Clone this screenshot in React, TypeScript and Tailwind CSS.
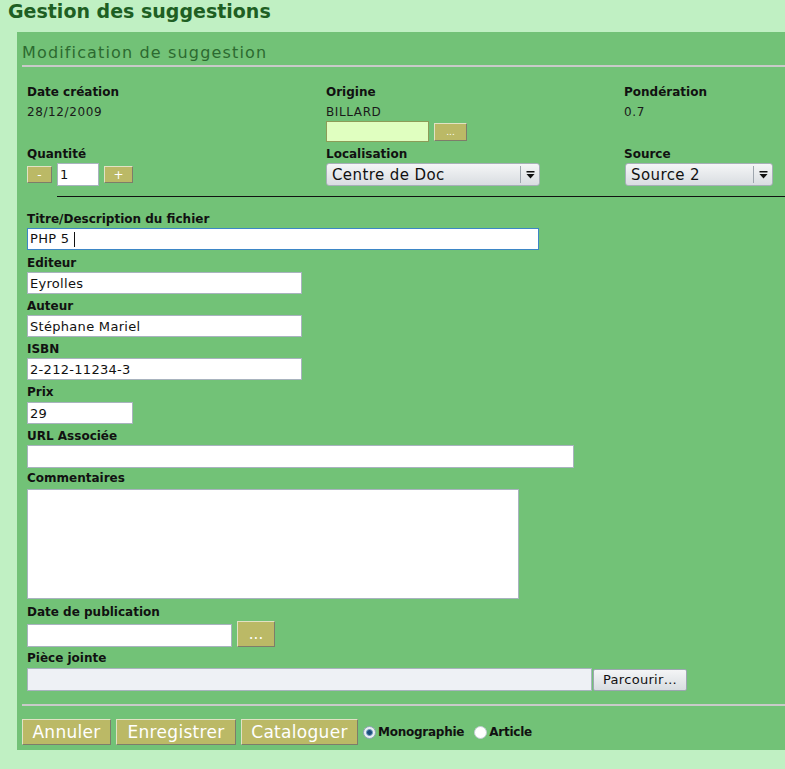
import React from "react";

const Label = ({ children }: { children: React.ReactNode }) => (
  <div className="text-[12px] font-bold leading-[14px] text-[#111]">{children}</div>
);

const Value = ({ children }: { children: React.ReactNode }) => (
  <div className="mt-[6px] text-[12px] leading-[14px] tracking-[0.6px] text-[#1a1a1a]">{children}</div>
);

const olive =
  "bg-[#bbb966] text-white border border-t-[#e2e2c4] border-l-[#e2e2c4] border-b-[#7d7d6a] border-r-[#7d7d6a]";

const field =
  "block h-[22px] border border-[#a8b3be] bg-white px-[2px] text-[13px] tracking-[0.3px] text-[#111] outline-none";

const Select = ({ value, width }: { value: string; width: string }) => (
  <div
    className={`flex h-[23px] ${width} items-center rounded-[3px] border border-[#a7afb8] bg-gradient-to-b from-[#f5f6f7] to-[#d9dde1]`}
  >
    <span className="flex-1 pl-[5px] text-[15px] leading-[18px] tracking-[0.4px] text-[#111]">{value}</span>
    <span className="flex h-[17px] w-[19px] items-center justify-center border-l border-[#9ea6ae]">
      <svg width="9" height="8" viewBox="0 0 9 8">
        <rect x="0.5" y="0" width="8" height="1.5" fill="#111" />
        <polygon points="0.5,3 8.5,3 4.5,7.5" fill="#111" />
      </svg>
    </span>
  </div>
);

const Radio = ({ checked }: { checked?: boolean }) => (
  <span
    className={`flex h-[13px] w-[13px] items-center justify-center rounded-full border ${
      checked ? "border-[#8da2b4] bg-[#e9eef2]" : "border-[#c4ccd4] bg-white"
    }`}
  >
    {checked && <span className="h-[7px] w-[7px] rounded-full border border-[#6f9ac0] bg-[#1b4e7c]" />}
  </span>
);

export default function App() {
  return (
    <div className="min-h-screen overflow-hidden bg-[#c0f0c3] font-['DejaVu_Sans',Verdana,sans-serif]">
      <h1 className="pl-[8px] text-[19px] font-bold leading-[22px] text-[#1e5f23]">Gestion des suggestions</h1>

      <div className="ml-[17px] mt-[10px] bg-[#72c277] pb-[5px] pl-[5px]">
        <div className="pt-[11px] text-[16px] leading-[19px] tracking-[1.15px] text-[#2c6a30]">
          Modification de suggestion
        </div>
        <div className="mt-[3px] h-[2px] bg-[#c9cac9]" />

        <div className="pl-[5px]">
          <div className="mt-[18px] grid grid-cols-[299px_298px_1fr]">
            <div>
              <Label>Date création</Label>
              <Value>28/12/2009</Value>
            </div>
            <div>
              <Label>Origine</Label>
              <Value>BILLARD</Value>
              <div className="mt-[2px] flex items-center gap-[5px]">
                <input
                  readOnly
                  className="h-[21px] w-[103px] border border-[#8d9c58] bg-[#e0ffc0] outline-none"
                />
                <button className={`h-[18px] w-[33px] text-[9px] leading-[10px] ${olive}`}>...</button>
              </div>
            </div>
            <div>
              <Label>Pondération</Label>
              <Value>0.7</Value>
            </div>

            <div className="mt-[5px]">
              <Label>Quantité</Label>
              <div className="mt-[2px] flex items-center gap-[5px]">
                <button className={`h-[17px] w-[25px] text-[12px] leading-[12px] ${olive}`}>-</button>
                <input readOnly value="1" className={`${field} !h-[23px] w-[42px]`} />
                <button className={`h-[17px] w-[29px] text-[12px] leading-[12px] ${olive}`}>+</button>
              </div>
            </div>
            <div className="mt-[5px]">
              <Label>Localisation</Label>
              <div className="mt-[2px]">
                <Select value="Centre de Doc" width="w-[214px]" />
              </div>
            </div>
            <div className="mt-[5px]">
              <Label>Source</Label>
              <div className="mt-[2px] pl-[1px]">
                <Select value="Source 2" width="w-[148px]" />
              </div>
            </div>
          </div>

          <div className="ml-[30px] mt-[10px] h-[1px] bg-[#111]" />

          <div className="mt-[15px]">
            <Label>Titre/Description du fichier</Label>
            <div className="mt-[2px] flex h-[22px] w-[512px] items-center border border-[#3d86c6] bg-white px-[2px] text-[13px] tracking-[0.3px] text-[#111]">
              PHP 5&nbsp;
              <span className="inline-block h-[15px] w-[1px] bg-[#111]" />
            </div>
          </div>

          <div className="mt-[6px]">
            <Label>Editeur</Label>
            <input readOnly value="Eyrolles" className={`${field} mt-[2px] w-[275px]`} />
          </div>
          <div className="mt-[5px]">
            <Label>Auteur</Label>
            <input readOnly value="Stéphane Mariel" className={`${field} mt-[2px] w-[275px]`} />
          </div>
          <div className="mt-[5px]">
            <Label>ISBN</Label>
            <input readOnly value="2-212-11234-3" className={`${field} mt-[2px] w-[275px]`} />
          </div>
          <div className="mt-[5px]">
            <Label>Prix</Label>
            <input readOnly value="29" className={`${field} mt-[3px] w-[106px]`} />
          </div>
          <div className="mt-[5px]">
            <Label>URL Associée</Label>
            <input readOnly className={`${field} mt-[2px] !h-[23px] w-[547px]`} />
          </div>
          <div className="mt-[3px]">
            <Label>Commentaires</Label>
            <textarea
              readOnly
              className="mt-[4px] block h-[110px] w-[492px] resize-none border border-[#a8b3be] bg-white outline-none"
            />
          </div>
          <div className="mt-[6px]">
            <Label>Date de publication</Label>
            <div className="mt-[2px] flex items-end gap-[5px]">
              <input readOnly className={`${field} !h-[23px] w-[205px]`} />
              <button className={`h-[26px] w-[38px] text-[15px] leading-[16px] ${olive}`}>...</button>
            </div>
          </div>
          <div className="mt-[4px]">
            <Label>Pièce jointe</Label>
            <div className="mt-[3px] flex items-center gap-[1px]">
              <div className="h-[23px] w-[565px] border border-[#a8b3be] bg-[#eef1f5]" />
              <button className="h-[22px] w-[94px] rounded-[2px] border border-[#9ba6b0] bg-gradient-to-b from-[#f4f5f6] to-[#d8dde1] text-[13px] tracking-[0.3px] text-[#111]">
                Parcourir…
              </button>
            </div>
          </div>
        </div>

        <div className="mt-[13px] h-[2px] bg-[#c9cac9]" />

        <div className="mt-[13px] flex items-center gap-[5px]">
          <button className={`h-[26px] w-[89px] text-[17px] leading-[20px] tracking-[0.3px] ${olive}`}>Annuler</button>
          <button className={`h-[26px] w-[120px] text-[17px] leading-[20px] tracking-[0.3px] ${olive}`}>Enregistrer</button>
          <button className={`h-[26px] w-[117px] text-[17px] leading-[20px] tracking-[0.3px] ${olive}`}>Cataloguer</button>
          <div className="flex items-center gap-[2px]">
            <Radio checked />
            <span className="text-[12px] font-bold leading-[14px] tracking-[-0.25px] text-[#111]">Monographie</span>
          </div>
          <div className="ml-[5px] flex items-center gap-[2px]">
            <Radio />
            <span className="text-[12px] font-bold leading-[14px] tracking-[-0.25px] text-[#111]">Article</span>
          </div>
        </div>
      </div>
    </div>
  );
}
